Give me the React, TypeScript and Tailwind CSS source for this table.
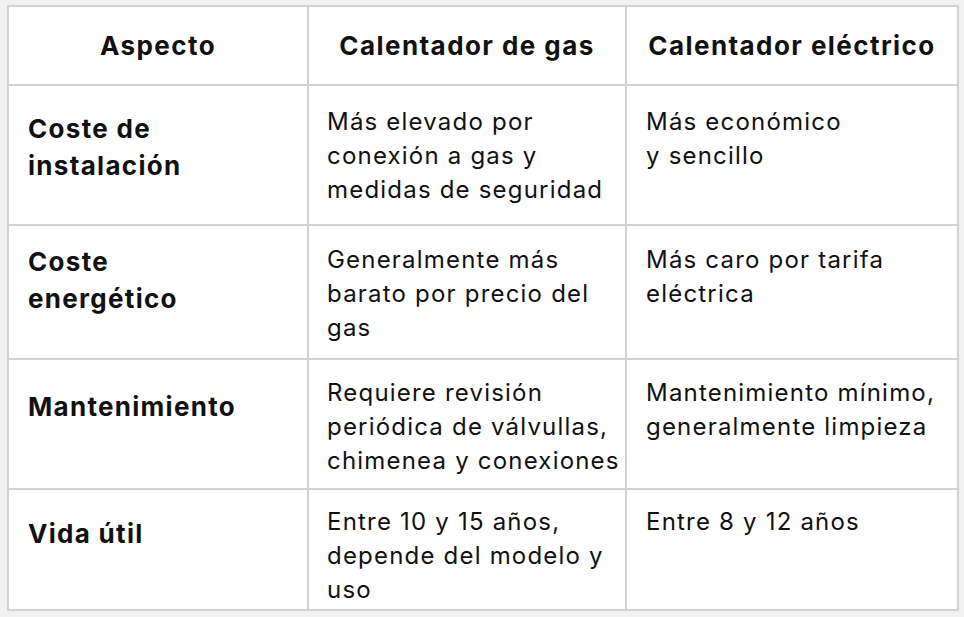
export default function App() {
  const font = { fontFamily: 'Inter, "Noto Sans", sans-serif' };
  const rows = [
    {
      head: ["Coste de", "instalación"],
      a: ["Más elevado por", "conexión a gas y", "medidas de seguridad"],
      b: ["Más económico", "y sencillo"],
      h: "h-[140px]",
      hp: "pt-[24px]",
      bp: "pt-[19px]",
    },
    {
      head: ["Coste", "energético"],
      a: ["Generalmente más", "barato por precio del", "gas"],
      b: ["Más caro por tarifa", "eléctrica"],
      h: "h-[134px]",
      hp: "pt-[17px]",
      bp: "pt-[17px]",
    },
    {
      head: ["Mantenimiento"],
      a: ["Requiere revisión", "periódica de válvullas,", "chimenea y conexiones"],
      b: ["Mantenimiento mínimo,", "generalmente limpieza"],
      h: "h-[130px]",
      hp: "pt-[28px]",
      bp: "pt-[16px]",
    },
    {
      head: ["Vida útil"],
      a: ["Entre 10 y 15 años,", "depende del modelo y", "uso"],
      b: ["Entre 8 y 12 años"],
      h: "h-[121px]",
      hp: "pt-[25px]",
      bp: "pt-[15px]",
    },
  ];
  return (
    <div className="w-[964px] h-[617px] bg-[#f2f2f2] pt-[5px] pl-[7px]" style={font}>
      <table className="table-fixed border-collapse bg-white text-[#111111] w-[950px]">
        <colgroup>
          <col className="w-[300px]" />
          <col className="w-[318px]" />
          <col className="w-[332px]" />
        </colgroup>
        <thead>
          <tr className="h-[79px]">
            {["Aspecto", "Calentador de gas", "Calentador eléctrico"].map((t) => (
              <th
                key={t}
                className="border-2 border-[#d2d2d2] text-center align-middle font-bold text-[26px] tracking-[0.055em] leading-[34px] px-0 whitespace-nowrap"
              >
                {t}
              </th>
            ))}
          </tr>
        </thead>
        <tbody>
          {rows.map((r, i) => (
            <tr key={i} className={r.h}>
              <td className={`border-2 border-[#d2d2d2] align-top pl-[19px] pr-3 font-bold text-[26px] tracking-[0.05em] leading-[37px] ${r.hp}`}>
                {r.head.map((l) => (
                  <div key={l}>{l}</div>
                ))}
              </td>
              <td className={`border-2 border-[#d2d2d2] align-top pl-[18px] pr-0 text-[24px] tracking-[0.05em] leading-[34px] ${r.bp}`}>
                {r.a.map((l) => (
                  <div key={l} className="whitespace-nowrap">{l}</div>
                ))}
              </td>
              <td className={`border-2 border-[#d2d2d2] align-top pl-[19px] pr-0 text-[24px] tracking-[0.05em] leading-[34px] ${r.bp}`}>
                {r.b.map((l) => (
                  <div key={l} className="whitespace-nowrap">{l}</div>
                ))}
              </td>
            </tr>
          ))}
        </tbody>
      </table>
    </div>
  );
}
